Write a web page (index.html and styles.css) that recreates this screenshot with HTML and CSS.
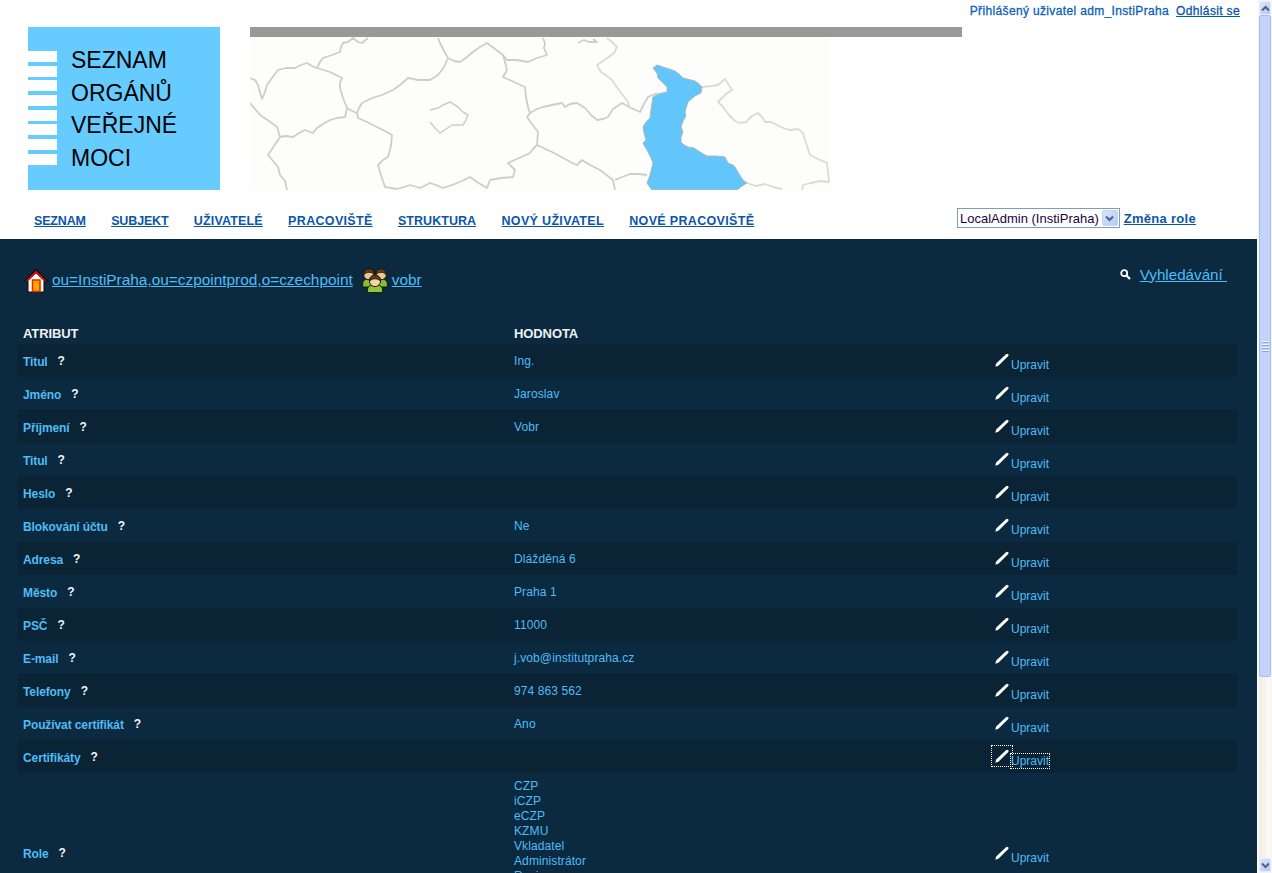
FILE: index.html
```html
<!DOCTYPE html>
<html lang="cs">
<head>
<meta charset="utf-8">
<title>Seznam orgánů veřejné moci</title>
<link rel="stylesheet" href="styles.css">
</head>
<body>
<svg class="defs" width="0" height="0">
  <symbol id="pen" viewBox="0 0 14 14">
    <path d="M0.300 13.700L1.200 10.600 11 1.200Q12.200 .300 13.200 1.200T13 3.300L3.400 12.800z" fill="#fff"/>
  </symbol>
</svg>
<div class="window">
<div class="page">
  <header class="header">
    <div class="userbar">
      <span class="user">Přihlášený uživatel adm_InstiPraha</span>
      <a class="logout" href="#">Odhlásit se</a>
    </div>
    <div class="banner">
      <div class="logo">
        <div class="stripes"><i></i><i></i><i></i><i></i><i></i><i></i><i></i><i></i></div>
        <div class="logo-text">SEZNAM<br>ORGÁNŮ<br>VEŘEJNÉ<br>MOCI</div>
      </div>
      <div class="map-box">
        <div class="map-bar"></div>
        <svg class="map" width="580" height="153" viewBox="250 37 580 153">
          <rect x="250" y="37" width="580" height="153" fill="#fdfdfc"/>
          <g fill="none" stroke="#cdcecb" stroke-width="1.800" stroke-linejoin="round">
            <path d="M250 78L255 80 258 85 260 92 262 99 265 92 267 85 272 78 278 70 286 68 295 68 301 65 307 63 312 66 317 68 330 72 342 78 340 83 340 88 343 98 347 108 345 117 337 118 330 120 323 124 317 128 313 133 305 130 299 133 293 137 286 136 280 137 277 127 269 121 260 115 255 109 250 103"/>
            <path d="M317 68L320 62 323 58 332 55 340 52 341 47 343 43 348 42 353 38 358 42 362 43 368 38"/>
            <path d="M280 137L274 146 268 155 273 161 278 167 280 175 285 181 287 190"/>
            <path d="M347 108L352 111 357 113 359 108 362 103 372 98 382 95 393 90 400 85 408 78 418 80 430 80 438 75 444 67 448 58 454 61 460 62 467 57 473 52 480 47 487 43 495 49 503 55"/>
            <path d="M438 38L440 43 444 51 448 58"/>
            <path d="M357 113L358 118 367 122 377 127 385 131 392 135 391 146 388 157 383 160 378 165 381 175 385 187 391 188 397 189 404 187 410 185 420 188 430 183 436 185 443 188 452 185 462 181 470 177 477 182 487 188 490 180 501 178 513 177 515 170 508 163 519 158 530 153 533 149 537 145"/>
            <path d="M503 55L507 60 517 60 528 62 537 58 547 55 544 48 545 43 543 38"/>
            <path d="M503 55L505 62 507 70 503 77 512 81 525 87 526 97 528 107 530 113 527 117 532 124 538 132 537 145 552 152 567 160 572 163 577 165 582 160 590 165 600 170 613 180 615 190"/>
            <path d="M530 113L537 109 543 107 552 105 562 103 565 107 570 104 577 103 585 108 591 115 597 120 603 119 608 117 613 109 622 103 631 108 640 112 644 104 648 97 657 93"/>
            <path d="M615 180L622 177 630 174 638 174 647 175"/>
            <path d="M578 43L584 40 589 42 597 42 593 39"/>
            <path d="M607 38L612 42 617 47 614 53 606 59 597 65 601 72 607 76 612 80 616 86 622 94 628 102 629 106" stroke="#dadbd8"/>
            <path d="M430 110L438 108 443 105 450 102 458 107 463 112 468 115 466 120 463 125 452 125 446 129 440 133 435 128 430 122" stroke-width="1.500"/>
            <path d="M702 87L712 86 718 85 725 79 729 85 732 90 726 94 718 102 723 107 729 115 735 121 740 123 746 122 752 116 758 113 762 117 765 122 771 122 777 125 783 128 790 130 798 129 803 133 806 143 810 155 818 159 827 163 828 172 829 182 820 181 811 183 803 185 802 190" stroke="#dadbd8"/>
            <path d="M747 183L756 186 765 184 773 187 782 189" stroke="#dadbd8"/>
          </g>
          <path fill="#62c6fb" stroke="#a9b9c0" stroke-width="1" stroke-linejoin="round" d="M653 68L657 65 666 68 675 71 679 74 683 78 687 79 695 81 699 84 702 87 701 93 695 96 688 102 686 108 685 113 686 116 683 121 681 127 683 132 681 137 681 142 684 145 688 147 694 148 700 152 705 155 707 156 716 156 725 157 727 161 728 163 733 165 735 167 739 174 743 180 747 183 742 186 737 190 652 190 649 186 647 183 650 175 653 163 651 158 647 150 644 145 643 143 646 140 644 133 643 127 646 122 650 118 651 110 652 103 653 97 658 94 667 92 667 87 662 82 658 78 657 73z"/>
        </svg>
      </div>
    </div>
    <nav class="navbar">
      <div class="menu">
        <a class="tight" href="#">SEZNAM</a>
        <a class="tight" href="#">SUBJEKT</a>
        <a href="#">UŽIVATELÉ</a>
        <a class="wide" href="#">PRACOVIŠTĚ</a>
        <a class="snug" href="#">STRUKTURA</a>
        <a class="wide" href="#">NOVÝ UŽIVATEL</a>
        <a class="wide" href="#">NOVÉ PRACOVIŠTĚ</a>
      </div>
      <div class="role">
        <div class="select">
          <span class="select-value">LocalAdmin (InstiPraha)</span>
          <span class="select-btn">
            <svg width="9" height="7" viewBox="0 0 9 7"><path d="M1 1.500l3.500 3.500 3.500-3.500" fill="none" stroke="#4d6185" stroke-width="2"/></svg>
          </span>
        </div>
        <a class="role-link" href="#">Změna role</a>
      </div>
    </nav>
  </header>

  <main class="main">
    <div class="crumbs">
      <div class="path">
        <svg class="icon-home" width="24" height="25" viewBox="0 0 24 25">
          <path d="M12 .800L.500 12.500 2.500 14.500 3.500 13.500V24.500H20.500V13.500L21.500 14.500 23.500 12.500z" fill="#1a0505"/>
          <path d="M12 2.500L2 12.500 3 13.500 12 5 21 13.500 22 12.500z" fill="#e60b0b"/>
          <path d="M12 5.500L19.500 12.500V23.500H4.500V12.500z" fill="#fff8ef"/>
          <rect x="8.500" y="12" width="7.500" height="11.500" fill="#ffa800" stroke="#e02a00" stroke-width="1.500"/>
        </svg>
        <a href="#">ou=InstiPraha,ou=czpointprod,o=czechpoint</a>
        <svg class="icon-people" width="26" height="25" viewBox="0 0 26 25">
          <g stroke="#14160a" stroke-width=".9">
            <path d="M.700 16c0-4 3-5 6-5s6 1 6 5v3H.700z" fill="#86bd34"/>
            <path d="M13 16c0-4 3-5 6-5s6.300 1 6.300 5v3H13z" fill="#86bd34"/>
            <circle cx="7" cy="6.500" r="5.300" fill="#f0c49a"/>
            <circle cx="19" cy="6.500" r="5.300" fill="#f0c49a"/>
            <path d="M1.800 6.500C1 -1 13 -1 12.200 6.500 9 3.500 5 3.500 1.800 6.500zM13.800 6.500C13 -1 25 -1 24.200 6.500 21 3.500 17 3.500 13.800 6.500z" fill="#6a3c14"/>
            <path d="M5.500 22c0-4 3.500-5 7.500-5s7.500 1 7.500 5v2.500H5.500z" fill="#8fc63a"/>
            <circle cx="13" cy="13" r="5.600" fill="#f6d3ac"/>
            <path d="M7.500 13C7 5 19 5 18.500 13 15 10 11 10 7.500 13z" fill="#6a3c14"/>
          </g>
        </svg>
        <a href="#">vobr</a>
      </div>
      <div class="search">
        <svg width="11" height="11" viewBox="0 0 11 11"><circle cx="4.200" cy="4.200" r="3" fill="none" stroke="#fff" stroke-width="1.800"/><path d="M6.500 6.500l3.500 3.500" stroke="#fff" stroke-width="2.200"/></svg>
        <a href="#">Vyhledávání&nbsp;</a>
      </div>
    </div>

    <table class="attrs">
      <colgroup><col class="c-attr"><col class="c-val"><col class="c-edit"></colgroup>
      <thead>
        <tr><th>ATRIBUT</th><th>HODNOTA</th><th></th></tr>
      </thead>
      <tbody>
        <tr><td class="name">Titul<b class="help">?</b></td><td>Ing.</td><td class="edit"><a href="#"><span class="pen"><svg width="14" height="14"><use href="#pen"/></svg></span><span class="lbl">Upravit</span></a></td></tr>
        <tr><td class="name">Jméno<b class="help">?</b></td><td>Jaroslav</td><td class="edit"><a href="#"><span class="pen"><svg width="14" height="14"><use href="#pen"/></svg></span><span class="lbl">Upravit</span></a></td></tr>
        <tr><td class="name">Příjmení<b class="help">?</b></td><td>Vobr</td><td class="edit"><a href="#"><span class="pen"><svg width="14" height="14"><use href="#pen"/></svg></span><span class="lbl">Upravit</span></a></td></tr>
        <tr><td class="name">Titul<b class="help">?</b></td><td></td><td class="edit"><a href="#"><span class="pen"><svg width="14" height="14"><use href="#pen"/></svg></span><span class="lbl">Upravit</span></a></td></tr>
        <tr><td class="name">Heslo<b class="help">?</b></td><td></td><td class="edit"><a href="#"><span class="pen"><svg width="14" height="14"><use href="#pen"/></svg></span><span class="lbl">Upravit</span></a></td></tr>
        <tr><td class="name">Blokování účtu<b class="help">?</b></td><td>Ne</td><td class="edit"><a href="#"><span class="pen"><svg width="14" height="14"><use href="#pen"/></svg></span><span class="lbl">Upravit</span></a></td></tr>
        <tr><td class="name">Adresa<b class="help">?</b></td><td>Dlážděná 6</td><td class="edit"><a href="#"><span class="pen"><svg width="14" height="14"><use href="#pen"/></svg></span><span class="lbl">Upravit</span></a></td></tr>
        <tr><td class="name">Město<b class="help">?</b></td><td>Praha 1</td><td class="edit"><a href="#"><span class="pen"><svg width="14" height="14"><use href="#pen"/></svg></span><span class="lbl">Upravit</span></a></td></tr>
        <tr><td class="name">PSČ<b class="help">?</b></td><td>11000</td><td class="edit"><a href="#"><span class="pen"><svg width="14" height="14"><use href="#pen"/></svg></span><span class="lbl">Upravit</span></a></td></tr>
        <tr><td class="name">E-mail<b class="help">?</b></td><td>j.vob@institutpraha.cz</td><td class="edit"><a href="#"><span class="pen"><svg width="14" height="14"><use href="#pen"/></svg></span><span class="lbl">Upravit</span></a></td></tr>
        <tr><td class="name">Telefony<b class="help">?</b></td><td>974 863 562</td><td class="edit"><a href="#"><span class="pen"><svg width="14" height="14"><use href="#pen"/></svg></span><span class="lbl">Upravit</span></a></td></tr>
        <tr><td class="name">Používat certifikát<b class="help">?</b></td><td>Ano</td><td class="edit"><a href="#"><span class="pen"><svg width="14" height="14"><use href="#pen"/></svg></span><span class="lbl">Upravit</span></a></td></tr>
        <tr><td class="name">Certifikáty<b class="help">?</b></td><td></td><td class="edit focused"><a href="#"><span class="pen"><svg width="14" height="14"><use href="#pen"/></svg></span><span class="lbl">Upravit</span></a></td></tr>
        <tr class="tall"><td class="name">Role<b class="help">?</b></td><td class="list">CZP<br>iCZP<br>eCZP<br>KZMU<br>Vkladatel<br>Administrátor<br>Revizor<br>Auditor<br>Operátor<br>Správce</td><td class="edit"><a href="#"><span class="pen"><svg width="14" height="14"><use href="#pen"/></svg></span><span class="lbl">Upravit</span></a></td></tr>
      </tbody>
    </table>
  </main>
</div>

<aside class="scrollbar">
  <div class="sb-btn"><svg width="9" height="7" viewBox="0 0 9 7"><path d="M1 5.500l3.500-3.500 3.500 3.500" fill="none" stroke="#4d6185" stroke-width="2"/></svg></div>
  <div class="sb-thumb"><i></i><i></i><i></i><i></i></div>
  <div class="sb-track"></div>
  <div class="sb-btn"><svg width="9" height="7" viewBox="0 0 9 7"><path d="M1 1.500l3.500 3.500 3.500-3.500" fill="none" stroke="#4d6185" stroke-width="2"/></svg></div>
</aside>
</div>
</body>
</html>
```

FILE: styles.css
```css
* { box-sizing: border-box; }
html, body { margin: 0; padding: 0; height: 873px; overflow: hidden; }
body { font-family: "Liberation Sans", Arial, sans-serif; font-size: 12px; background: #fff; }
.defs { display: block; height: 0; }
.window { display: flex; height: 873px; }
.page { flex: 1 1 auto; min-width: 0; height: 873px; overflow: hidden; background: #0b2a40; }

.header { background: #fff; height: 239px; }
.userbar { height: 27px; padding: 4px 17px 0 0; display: flex; justify-content: flex-end; gap: 7px; line-height: 14px; font-size: 12px; letter-spacing: .35px; }
.user { color: #0d5fb8; -webkit-text-stroke: .3px #0d5fb8; }
.logout { color: #0b55ad; text-decoration: underline; -webkit-text-stroke: .3px #0b55ad; }

.banner { display: flex; height: 163px; padding-left: 28px; gap: 30px; }
.logo { width: 192px; height: 163px; background: #66ccff; display: flex; }
.stripes { width: 29px; padding-top: 24px; display: flex; flex-direction: column; gap: 3.700px; }
.stripes i { display: block; height: 11px; background: #fff; }
.logo-text { margin: 17px 0 0 14px; font-size: 23px; line-height: 32.500px; color: #000; }
.map-box { width: 712px; }
.map-bar { height: 10px; background: #999a97; }
.map { display: block; }

.navbar { height: 49px; display: flex; align-items: flex-start; justify-content: space-between; padding: 18px 0 0 34px; }
.menu { display: flex; gap: 25.300px; line-height: 24px; padding-top: 1px; }
.menu a { color: #0b55ad; font-size: 12.500px; font-weight: bold; letter-spacing: .16px; text-decoration: underline; }
.menu a.tight { letter-spacing: -.15px; }
.menu a.snug { letter-spacing: .05px; }
.menu a.wide { letter-spacing: .33px; }
.role { display: flex; align-items: center; gap: 4px; margin-right: 61px; width: 239px; }
.select { width: 163px; height: 20px; border: 1px solid #7f9db9; display: flex; align-items: center; justify-content: space-between; padding: 1px 1px 1px 2px; background: #fff; }
.select-value { color: #16053d; font-size: 13px; white-space: nowrap; }
.select-btn { width: 16px; height: 16px; background: linear-gradient(135deg, #dce6fb, #b4c8f6); border: 1px solid #c3d3f8; border-radius: 2px; display: flex; align-items: center; justify-content: center; }
.role-link { color: #0b55ad; font-size: 13px; font-weight: bold; letter-spacing: .3px; text-decoration: underline; white-space: nowrap; }

.main { padding-top: 26px; }
.crumbs { height: 58px; padding: 0 30px 0 24px; display: flex; justify-content: space-between; align-items: flex-start; }
.crumbs a { color: #4fbcf6; text-decoration: underline; }
.path { display: flex; align-items: center; height: 30px; font-size: 15.400px; }
.icon-home { margin-right: 4px; }
.icon-people { margin: 0 4px 0 9px; }
.search { display: flex; align-items: center; gap: 9px; height: 18px; font-size: 15.200px; }

.attrs { margin-left: 18px; width: 1219px; border-collapse: collapse; table-layout: fixed; }
.c-attr { width: 491px; }
.c-val { width: 481px; }
.attrs th { height: 21px; padding: 0 0 0 5px; text-align: left; color: #eef1f3; font-size: 13px; letter-spacing: -.1px; }
.attrs td { height: 33px; padding: 0 0 0 5px; color: #4fbcf6; font-size: 12px; letter-spacing: .1px; vertical-align: middle; }
.attrs tbody tr:nth-child(odd) td { background: #0a2335; }
.attrs tbody tr.tall td { background: #0b2a40; height: 161px; }
.attrs td.name { font-weight: bold; letter-spacing: -.1px; padding-top: 2px; }
.attrs tr.tall td.name { padding-top: 0; }
.help { color: #f4f5f6; margin-left: 10px; vertical-align: 1px; }
.list { line-height: 15px; }
.edit a { display: flex; align-items: flex-start; height: 14px; color: #4fbcf6; text-decoration: none; }
.pen { width: 14px; height: 14px; display: block; margin: -1px 2px 0 0; }
.pen svg { display: block; }
.lbl { display: block; line-height: 14px; margin-top: 4px; letter-spacing: 0; }
.focused .pen { outline: 1px dotted #fff; outline-offset: 3px; }
.focused .lbl { outline: 1px dotted #fff; }

.scrollbar { flex: 0 0 15px; height: 873px; display: flex; flex-direction: column; background: #f7f5ef; padding: 1px; border-left: 1px solid #fff; }
.sb-btn { flex: 0 0 14px; background: linear-gradient(135deg, #dce6fb, #b4c8f6); border: 1px solid #e6ecfb; border-radius: 2px; display: flex; align-items: center; justify-content: center; }
.sb-thumb { flex: 0 0 662px; background: #c3d4fb; border: 1px solid #a9bdf0; border-radius: 2px; display: flex; flex-direction: column; align-items: center; justify-content: center; gap: 1px; }
.sb-thumb i { display: block; width: 7px; height: 2px; background: #eef3fe; border-bottom: 1px solid #8ba7e8; }
.sb-track { flex: 1 1 auto; background: linear-gradient(90deg, #f0ece2, #fdfcf8); }
```
